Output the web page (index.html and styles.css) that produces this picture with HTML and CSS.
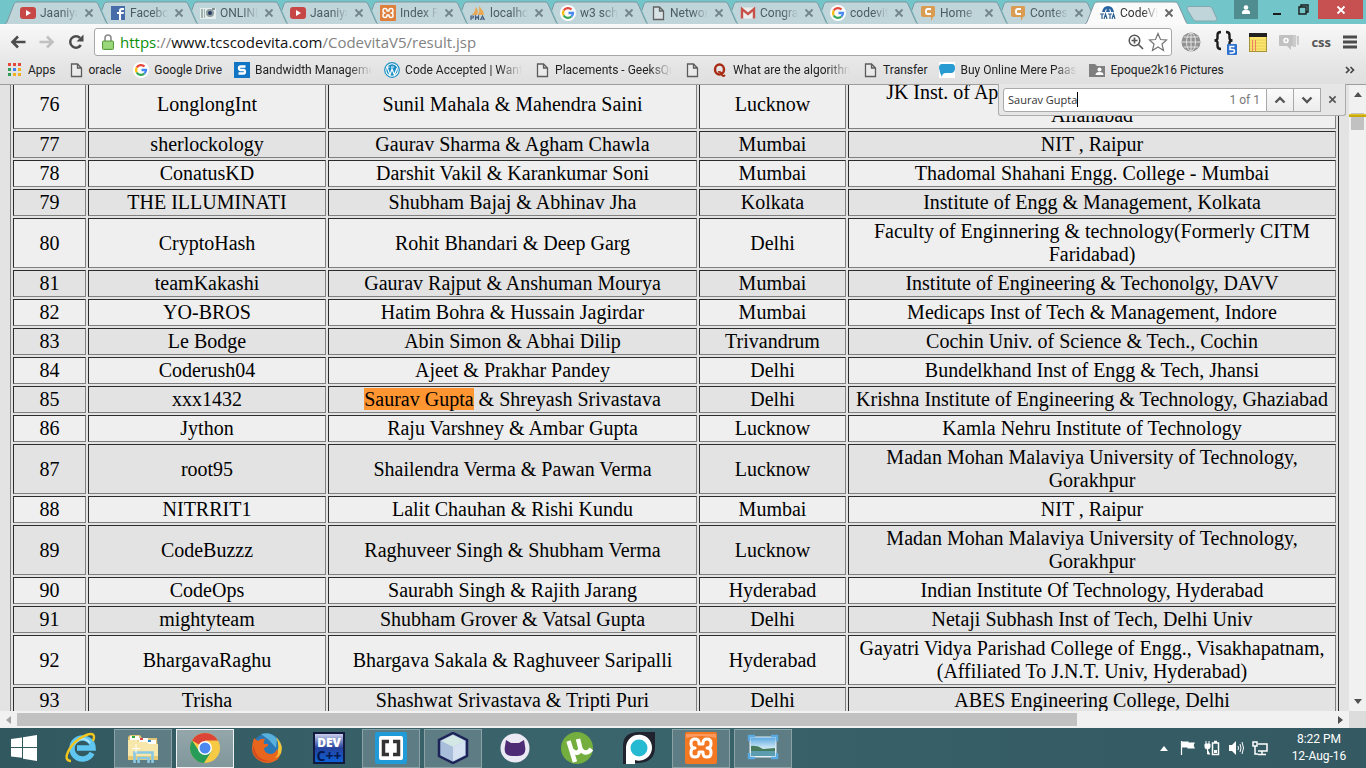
FILE: index.html
```html
<!DOCTYPE html>
<html lang="en">
<head>
<meta charset="utf-8">
<title>CodeVita</title>
<link rel="stylesheet" href="styles.css">
</head>
<body>
<svg class="defs" aria-hidden="true">
  <symbol id="tab" viewBox="0 0 106 24"><path d="M13 24 7 10 9 4Q10 2 12 2H90Q92 2 93 4L101 22Q102 24 104 24Z" fill="#bfd5da"/><path d="M7 10 9 4Q10 2 12 2H90Q92 2 93 4L101 22Q102 24 104 24" fill="none" stroke="#8097a0"/></symbol>
  <symbol id="tab-first" viewBox="0 0 106 24"><path d="M-1 24Q1 24 2 22L9 4Q10 2 12 2H90Q92 2 93 4L101 22Q102 24 104 24" fill="#bfd5da" stroke="#8097a0"/></symbol>
  <symbol id="tab-active" viewBox="0 0 106 24"><path d="M-1 25Q1 24 2 22L9 4Q10 2 12 2H90Q92 2 93 4L101 22Q102 24 104 25" fill="#fafafa" stroke="#8097a0"/></symbol>
  <symbol id="x" viewBox="0 0 10 10"><path d="M1.500 1.500 8.500 8.500M8.500 1.500 1.500 8.500" stroke="currentColor" stroke-width="1.800"/></symbol>
  <symbol id="youtube" viewBox="0 0 16 16"><rect y="2" width="16" height="12" rx="3" fill="#c8403f"/><path d="M6 5v6l5-3z" fill="#fff"/></symbol>
  <symbol id="facebook" viewBox="0 0 16 16"><rect x="1" y="1" width="14" height="14" fill="#4267a8"/><path d="M9 15V9H7V7h2V5.500Q9 3 11.500 3H14v2h-1.500Q11 5 11 6v1h3l-.5 2H11v6z" fill="#fff"/></symbol>
  <symbol id="camera" viewBox="0 0 16 16"><rect y="3" width="16" height="11" fill="#e9efef"/><path d="M1 4h2v9H1zM4 4h1v9H4z" fill="#9fb3ad"/><circle cx="10" cy="8" r="4" fill="#8a9a9c"/><circle cx="10" cy="8" r="2" fill="#23335c"/><path d="M12 3h3v2h-3z" fill="#7d8e90"/></symbol>
  <symbol id="xampp-mark" viewBox="0 0 32 32"><path d="M10 7Q6 7 6 11v1q0 4 4 4-4 0-4 4v1q0 4 4 4 4 0 4-4v-1h4v1q0 4 4 4t4-4v-1q0-4-4-4 4 0 4-4v-1q0-4-4-4t-4 4v1h-4v-1q0-4-4-4z" fill="none" stroke="#fff" stroke-width="3" stroke-linejoin="round"/></symbol>
  <symbol id="xampp" viewBox="0 0 16 16"><rect width="16" height="16" rx="1" fill="#e07c33"/><use href="#xampp-mark" width="16" height="16"/></symbol>
  <symbol id="pma" viewBox="0 0 16 16"><path d="M2 10Q5 7 6 2q3 4 1 8zM8 10q2-4 1-9 5 5 5 9z" fill="#eda64d"/><path d="M1 15v-4h2q1 1 0 2H1M5.500 15v-4l1.500 2 1.500-2v4M10.500 15l2-4 2 4m-3-1h2" fill="none" stroke="#435a7c" stroke-width="1.200"/></symbol>
  <symbol id="google" viewBox="0 0 16 16"><circle cx="8" cy="8" r="8" fill="#fff"/><g fill="none" stroke-width="2.300"><path d="M11.500 4.500A5 5 0 0 0 3.700 5.500" stroke="#ea4335"/><path d="M3.700 5.500a5 5 0 0 0 0 5" stroke="#fbbc05"/><path d="M3.700 10.500a5 5 0 0 0 7.800 1" stroke="#34a853"/><path d="M11.500 11.500A5 5 0 0 0 13 8H8.500" stroke="#4285f4"/></g></symbol>
  <symbol id="page" viewBox="0 0 16 16"><path d="M3.500 2h6l4 4v8.500h-10zM9.500 2v4h4" fill="#f1f1f1" fill-opacity=".5" stroke="#5c5c5c" stroke-width="1.300"/></symbol>
  <symbol id="gmail" viewBox="0 0 16 16"><rect x="1" y="2.500" width="14" height="11" fill="#eee"/><path d="M2 13.500V4l6 5 6-5v9.500" fill="none" stroke="#c84a40" stroke-width="2.400"/></symbol>
  <symbol id="chef" viewBox="0 0 16 16"><path d="M1 2q0-1 2-1h10q2 0 2 1v8q0 2-2 2l-2 4v-4H3q-2 0-2-2z" fill="#dc994b"/><path d="M11 4H7.500Q6 4 6 6.500T7.500 9H11" fill="none" stroke="#fff" stroke-width="2"/></symbol>
  <symbol id="tata" viewBox="0 0 16 16"><path d="M0 0h16v16H0z" fill="#fff"/><path d="M2 7Q3 1 8 1t6 6h-3q0-3.500-3-3.500T5 7zM7 3h2l1 4H6z" fill="#1f5c9c"/><path d="M0 9h4M2 9v5M4 14l1.500-5L7 14M8 9h4M10 9v5M12 14l1.500-5 1.500 5" fill="none" stroke="#24578f" stroke-width="1.200"/></symbol>
</svg>

<header class="browser">
  <div class="titlebar">
    <nav class="tabs" aria-label="Tabs">
      <div class="tab"><svg class="shape"><use href="#tab-first"/></svg><svg class="ico"><use href="#youtube"/></svg><a href="#">Jaaniya</a><button aria-label="Close tab"><svg><use href="#x"/></svg></button></div>
      <div class="tab"><svg class="shape"><use href="#tab"/></svg><svg class="ico"><use href="#facebook"/></svg><a href="#">Facebook</a><button aria-label="Close tab"><svg><use href="#x"/></svg></button></div>
      <div class="tab"><svg class="shape"><use href="#tab"/></svg><svg class="ico"><use href="#camera"/></svg><a href="#">ONLINE</a><button aria-label="Close tab"><svg><use href="#x"/></svg></button></div>
      <div class="tab"><svg class="shape"><use href="#tab"/></svg><svg class="ico"><use href="#youtube"/></svg><a href="#">Jaaniya</a><button aria-label="Close tab"><svg><use href="#x"/></svg></button></div>
      <div class="tab"><svg class="shape"><use href="#tab"/></svg><svg class="ico"><use href="#xampp"/></svg><a href="#">Index P</a><button aria-label="Close tab"><svg><use href="#x"/></svg></button></div>
      <div class="tab"><svg class="shape"><use href="#tab"/></svg><svg class="ico"><use href="#pma"/></svg><a href="#">localhost</a><button aria-label="Close tab"><svg><use href="#x"/></svg></button></div>
      <div class="tab"><svg class="shape"><use href="#tab"/></svg><svg class="ico"><use href="#google"/></svg><a href="#">w3 scho</a><button aria-label="Close tab"><svg><use href="#x"/></svg></button></div>
      <div class="tab"><svg class="shape"><use href="#tab"/></svg><svg class="ico"><use href="#page"/></svg><a href="#">Network</a><button aria-label="Close tab"><svg><use href="#x"/></svg></button></div>
      <div class="tab"><svg class="shape"><use href="#tab"/></svg><svg class="ico"><use href="#gmail"/></svg><a href="#">Congrat</a><button aria-label="Close tab"><svg><use href="#x"/></svg></button></div>
      <div class="tab"><svg class="shape"><use href="#tab"/></svg><svg class="ico"><use href="#google"/></svg><a href="#">codevita</a><button aria-label="Close tab"><svg><use href="#x"/></svg></button></div>
      <div class="tab"><svg class="shape"><use href="#tab"/></svg><svg class="ico"><use href="#chef"/></svg><a href="#">Home</a><button aria-label="Close tab"><svg><use href="#x"/></svg></button></div>
      <div class="tab"><svg class="shape"><use href="#tab"/></svg><svg class="ico"><use href="#chef"/></svg><a href="#">Contest</a><button aria-label="Close tab"><svg><use href="#x"/></svg></button></div>
      <div class="tab active"><svg class="shape"><use href="#tab-active"/></svg><svg class="ico"><use href="#tata"/></svg><a href="#">CodeVi</a><button aria-label="Close tab"><svg><use href="#x"/></svg></button></div>
    </nav>
    <button class="newtab" aria-label="New tab"><svg viewBox="0 0 32 16"><path d="M3 .5H23Q25 .5 26 2L31 13Q31 15 29 15H10Q8 15 7 13L1 3Q1 .5 3 .5Z" fill="#bfd5da" stroke="#86a6ae"/></svg></button>
    <div class="wincontrols">
      <button class="user" aria-label="Profile"><svg width="10" height="10" viewBox="0 0 10 10"><circle cx="5" cy="2.500" r="2.300" fill="#fff"/><path d="M1 9V7q0-1 2-2h4q2 1 2 2v2z" fill="#fff"/></svg></button>
      <button class="min" aria-label="Minimize"><svg width="10" height="12" viewBox="0 0 10 12"><path d="M1 10h8" stroke="#1c1c1c" stroke-width="2"/></svg></button>
      <button class="max" aria-label="Restore"><svg width="11" height="11" viewBox="0 0 11 11"><path d="M1 3h7v7H1zM3 3V1h7v7H8" fill="none" stroke="#1c1c1c" stroke-width="1.400"/></svg></button>
      <button class="close" aria-label="Close"><svg width="10" height="10"><use href="#x"/></svg></button>
    </div>
  </div>

  <div class="toolbar">
    <button class="nav" aria-label="Back"><svg viewBox="0 0 16 16"><path d="M15.500 8H2.500M8 2.500 2.500 8 8 13.500" fill="none" stroke="#4c4c4c" stroke-width="2.600"/></svg></button>
    <button class="nav" aria-label="Forward"><svg viewBox="0 0 16 16"><path d="M.5 8h13M8 2.500 13.500 8 8 13.500" fill="none" stroke="#c0c0c0" stroke-width="2.600"/></svg></button>
    <button class="nav" aria-label="Reload"><svg viewBox="0 0 16 16"><path d="M12.800 11A5.700 5.700 0 1 1 12 4" fill="none" stroke="#4c4c4c" stroke-width="2.500"/><path d="M15.500.5v7h-7z" fill="#4c4c4c"/></svg></button>
    <div class="omnibox">
      <svg class="lock" viewBox="0 0 12 16"><path d="M3 8V4q0-3 3-3t3 3v4" fill="none" stroke="#8b8b8b" stroke-width="1.600"/><rect x=".5" y="7" width="11" height="8.500" rx="1" fill="#8bd168" stroke="#5c9c45"/><path d="M1.500 9h9M1.500 11h9M1.500 13h9" stroke="#a9df8e"/></svg>
      <div class="url" role="textbox" aria-label="Address" contenteditable="true" spellcheck="false"><span class="secure">https</span>://<b>www.tcscodevita.com</b>/CodevitaV5/result.jsp</div>
      <button aria-label="Zoom"><svg width="16" height="16" viewBox="0 0 16 16"><circle cx="6.500" cy="6.500" r="5.300" fill="none" stroke="#585858" stroke-width="1.500"/><path d="M3.500 6.500h6M6.500 3.500v6M10.500 10.500l4.500 4.500" stroke="#585858" stroke-width="1.700"/></svg></button>
      <button aria-label="Bookmark"><svg width="20" height="20" viewBox="0 0 20 20"><path d="M10 1.500 12.500 7.500 18.500 8 14 12 15.500 18.500 10 15 4.500 18.500 6 12 1.500 8 7.500 7.500z" fill="#fff" stroke="#757575" stroke-width="1.200"/></svg></button>
    </div>
    <div class="extensions">
      <button aria-label="Globe"><svg width="20" height="20" viewBox="0 0 20 20"><circle cx="10" cy="10" r="9.500" fill="#929292"/><path d="M1 10h18M10 1v18M3 5h14M3 15h14" stroke="#e3e3e3"/><ellipse cx="10" cy="10" rx="4.500" ry="9" fill="none" stroke="#e3e3e3"/></svg></button>
      <button aria-label="Validator"><svg width="24" height="26" viewBox="0 0 24 26"><path d="M8 3Q4.500 3 4.500 6v3q0 2.500-3 2.500 3 0 3 2.500v3q0 3 3.500 3M13 3q3.500 0 3.500 3v3q0 2.500 3 2.500-3 0-3 2.500v3" fill="none" stroke="#1d1d1d" stroke-width="2.400"/><rect x="14" y="15" width="10" height="11" rx="1" fill="#2f72d0"/><path d="M21.500 17.500H17v3h2.500q2 0 2 1.700T19 24h-2.500" fill="none" stroke="#fff" stroke-width="1.500"/></svg></button>
      <button aria-label="Notes"><svg width="18" height="20" viewBox="0 0 18 20"><rect x=".5" y="1.500" width="17" height="18" fill="#fbe56c" stroke="#a69237"/><path d="M1 8h16M1 11h16M1 14h16M1 17h16" stroke="#e6d05c"/><path d="M3.500 8v11M6.500 8v11" stroke="#ed8067"/><path d="M0 1h18v4H0z" fill="#222"/></svg></button>
      <button aria-label="Chat"><svg width="20" height="18" viewBox="0 0 20 18"><path d="M7 2h10v12h-3M17.500 3H20v9h-2" fill="#ccc"/><path d="M1 2h12q1 0 1 1v9q0 1-1 1h-1v4l-4-4H1q-1 0-1-1V3q0-1 1-1z" fill="#c1c1c1"/><circle cx="7" cy="7.500" r="2" fill="none" stroke="#fff" stroke-width="1.500"/></svg></button>
      <button class="css">css</button>
      <button aria-label="Menu"><svg width="14" height="14" viewBox="0 0 14 14"><path d="M0 2h14M0 7h14M0 12h14" stroke="#4c4c4c" stroke-width="3"/></svg></button>
    </div>
  </div>

  <nav class="bookmarks" aria-label="Bookmarks">
    <a href="#"><svg viewBox="0 0 16 16"><path d="M1 1h3v3H1zM6 1h3v3H6zM11 1h3v3h-3z" fill="#e5463b"/><path d="M1 6h3v3H1zM1 11h3v3H1z" fill="#2f9e58"/><path d="M6 6h3v3H6z" fill="#3f80ee"/><path d="M11 6h3v3h-3zM6 11h3v3H6zM11 11h3v3h-3z" fill="#f2b01e"/></svg><span>Apps</span></a>
    <a href="#"><svg><use href="#page"/></svg><span>oracle</span></a>
    <a href="#"><svg><use href="#google"/></svg><span>Google Drive</span></a>
    <a href="#"><svg viewBox="0 0 16 16"><path d="M0 0h16v16H0z" fill="#0f75c4"/><path d="M11.500 4.500h-5q-1.500 0-1.500 1.700T6.500 8h3q1.500 0 1.500 1.800t-1.500 1.700h-5" fill="none" stroke="#fff" stroke-width="2.300"/></svg><span class="fade">Bandwidth Management</span></a>
    <a href="#"><svg viewBox="0 0 16 16"><circle cx="8" cy="8" r="7.300" fill="#fff" stroke="#1b8fc4" stroke-width="1.200"/><circle cx="8" cy="8" r="5.700" fill="#1b8fc4"/><path d="M3 5l3 8 2-6 2.500 6L13 6M2.500 5h3M7 5h3" fill="none" stroke="#fff" stroke-width="1.200"/></svg><span class="fade">Code Accepted | Wants to</span></a>
    <a href="#"><svg><use href="#page"/></svg><span class="fade">Placements - GeeksQuiz</span></a>
    <a href="#" aria-label="Bookmark"><svg><use href="#page"/></svg></a>
    <a href="#"><svg viewBox="0 0 16 16"><ellipse cx="7.500" cy="7.500" rx="4.500" ry="5" fill="none" stroke="#a82c13" stroke-width="2.500"/><path d="M6 10q3-1 4 3 1 2 3 0" fill="none" stroke="#a82c13" stroke-width="1.800"/></svg><span class="fade">What are the algorithms</span></a>
    <a href="#"><svg><use href="#page"/></svg><span>Transfer</span></a>
    <a href="#"><svg viewBox="0 0 16 16"><path d="M0 0h16v16H0z" fill="#fff"/><path d="M3 2h10q3 0 3 4t-3 5H7q-4 0-4 4-2-3-3-9 0-4 3-4z" fill="#289bd2"/></svg><span class="fade">Buy Online Mere Paas</span></a>
    <a href="#"><svg viewBox="0 0 16 16"><path d="M0 2h6l2 2h8v11H0z" fill="#7f7f7f"/><circle cx="10.500" cy="7.500" r="2" fill="#fff"/><path d="M6.500 13q0-3 4-3t4 3z" fill="#fff"/></svg><span>Epoque2k16 Pictures</span></a>
    <button class="more" aria-label="More bookmarks"><svg viewBox="0 0 10 8"><path d="M1 1l3 3-3 3M5.500 1l3 3-3 3" fill="none" stroke="#444" stroke-width="1.700"/></svg></button>
  </nav>
</header>

<main class="viewport">
  <form class="find">
    <label class="findbox"><input type="text" value="Saurav Gupta" aria-label="Find in page"><i class="caret"></i><span>1 of 1</span></label>
    <button type="button" aria-label="Previous"><svg viewBox="0 0 12 8"><path d="M1.500 6.500 6 2l4.500 4.500" fill="none" stroke="#555" stroke-width="2.400"/></svg></button>
    <button type="button" aria-label="Next"><svg viewBox="0 0 12 8"><path d="M1.500 1.500 6 6l4.500-4.500" fill="none" stroke="#555" stroke-width="2.400"/></svg></button>
    <button type="button" class="findclose" aria-label="Close find bar"><svg><use href="#x"/></svg></button>
  </form>
  <div class="content">
    <table class="results">
      <colgroup><col class="rank"><col class="team"><col class="members"><col class="city"><col></colgroup>
      <tbody>
      <tr><td>76</td><td>LonglongInt</td><td>Sunil Mahala &amp; Mahendra Saini</td><td>Lucknow</td><td>JK Inst. of Applied Physics &amp; Technology, Univ. of<br>Allahabad</td></tr>
      <tr><td>77</td><td>sherlockology</td><td>Gaurav Sharma &amp; Agham Chawla</td><td>Mumbai</td><td>NIT , Raipur</td></tr>
      <tr><td>78</td><td>ConatusKD</td><td>Darshit Vakil &amp; Karankumar Soni</td><td>Mumbai</td><td>Thadomal Shahani Engg. College - Mumbai</td></tr>
      <tr><td>79</td><td>THE ILLUMINATI</td><td>Shubham Bajaj &amp; Abhinav Jha</td><td>Kolkata</td><td>Institute of Engg &amp; Management, Kolkata</td></tr>
      <tr><td>80</td><td>CryptoHash</td><td>Rohit Bhandari &amp; Deep Garg</td><td>Delhi</td><td>Faculty of Enginnering &amp; technology(Formerly CITM Faridabad)</td></tr>
      <tr><td>81</td><td>teamKakashi</td><td>Gaurav Rajput &amp; Anshuman Mourya</td><td>Mumbai</td><td>Institute of Engineering &amp; Techonolgy, DAVV</td></tr>
      <tr><td>82</td><td>YO-BROS</td><td>Hatim Bohra &amp; Hussain Jagirdar</td><td>Mumbai</td><td>Medicaps Inst of Tech &amp; Management, Indore</td></tr>
      <tr><td>83</td><td>Le Bodge</td><td>Abin Simon &amp; Abhai Dilip</td><td>Trivandrum</td><td>Cochin Univ. of Science &amp; Tech., Cochin</td></tr>
      <tr><td>84</td><td>Coderush04</td><td>Ajeet &amp; Prakhar Pandey</td><td>Delhi</td><td>Bundelkhand Inst of Engg &amp; Tech, Jhansi</td></tr>
      <tr><td>85</td><td>xxx1432</td><td><mark>Saurav Gupta</mark> &amp; Shreyash Srivastava</td><td>Delhi</td><td>Krishna Institute of Engineering &amp; Technology, Ghaziabad</td></tr>
      <tr><td>86</td><td>Jython</td><td>Raju Varshney &amp; Ambar Gupta</td><td>Lucknow</td><td>Kamla Nehru Institute of Technology</td></tr>
      <tr><td>87</td><td>root95</td><td>Shailendra Verma &amp; Pawan Verma</td><td>Lucknow</td><td>Madan Mohan Malaviya University of Technology, Gorakhpur</td></tr>
      <tr><td>88</td><td>NITRRIT1</td><td>Lalit Chauhan &amp; Rishi Kundu</td><td>Mumbai</td><td>NIT , Raipur</td></tr>
      <tr><td>89</td><td>CodeBuzzz</td><td>Raghuveer Singh &amp; Shubham Verma</td><td>Lucknow</td><td>Madan Mohan Malaviya University of Technology, Gorakhpur</td></tr>
      <tr><td>90</td><td>CodeOps</td><td>Saurabh Singh &amp; Rajith Jarang</td><td>Hyderabad</td><td>Indian Institute Of Technology, Hyderabad</td></tr>
      <tr><td>91</td><td>mightyteam</td><td>Shubham Grover &amp; Vatsal Gupta</td><td>Delhi</td><td>Netaji Subhash Inst of Tech, Delhi Univ</td></tr>
      <tr><td>92</td><td>BhargavaRaghu</td><td>Bhargava Sakala &amp; Raghuveer Saripalli</td><td>Hyderabad</td><td>Gayatri Vidya Parishad College of Engg., Visakhapatnam,(Affiliated To J.N.T. Univ, Hyderabad)</td></tr>
      <tr><td>93</td><td>Trisha</td><td>Shashwat Srivastava &amp; Tripti Puri</td><td>Delhi</td><td>ABES Engineering College, Delhi</td></tr>
      </tbody>
    </table>
  </div>
  <div class="vscroll" aria-hidden="true">
    <svg viewBox="0 0 8 5"><path d="M0 5 4 0l4 5z" fill="#505050"/></svg>
    <div class="vthumb"><div class="hit"></div></div>
    <svg viewBox="0 0 8 5"><path d="M0 0h8L4 5z" fill="#505050"/></svg>
  </div>
  <div class="hscroll" aria-hidden="true">
    <svg viewBox="0 0 5 8"><path d="M5 0v8L0 4z" fill="#a3a3a3"/></svg>
    <div class="htrack"><div class="hthumb"></div></div>
    <svg viewBox="0 0 5 8"><path d="M0 0v8l5-4z" fill="#505050"/></svg>
  </div>
  <div class="corner"></div>
</main>

<footer class="taskbar">
  <button class="start" aria-label="Start"><svg width="28" height="26" viewBox="0 0 28 26"><path d="M1 4 12 2.500V12H1zM13 2.300 27 0v12H13zM1 13h11v9.800L1 21.500zM13 13h14v13l-14-2.300z" fill="#fff"/></svg></button>
  <button aria-label="Internet Explorer"><svg viewBox="0 0 32 32"><path d="M27 21A10.500 10.500 0 1 1 28 16H12" fill="none" stroke="#5fc6f2" stroke-width="5.500"/><path d="M10 11A9 9 0 0 1 25 11" fill="none" stroke="#a9e4fb" stroke-width="2"/><path d="M6 29C-4 29 5 13 14 7s18-8 14 2" fill="none" stroke="#f2c61f" stroke-width="2.400"/></svg></button>
  <button class="open" aria-label="File Explorer"><svg viewBox="0 0 32 32"><path d="M1 5 3 3h10l2 3h15l1 20H1z" fill="#e0c478"/><path d="M3 4h9v4H3zM12 6h9v4h-9zM20 8h9v4h-9z" fill="#fff"/><path d="M5 4h3v2H5z" fill="#3a3"/><path d="M13 6h3v2h-3z" fill="#d44"/><path d="M21 8h3v2h-3z" fill="#38c"/><path d="M1 8h9l2 2h8l2 2h9v16H1z" fill="#f8e7aa"/><path d="M1 24h30v4H1z" fill="#eacb72"/><path d="M7.500 31V20.500h18V31M11.500 31v-5h10v5" fill="none" stroke="#8ac9e4" stroke-width="2.600"/><path d="M9 12v9M5 16.500h8" stroke="#fff"/></svg></button>
  <button class="open current" aria-label="Google Chrome"><svg viewBox="0 0 32 32"><circle cx="16" cy="16" r="15" fill="#f7ca45"/><path d="M16 16 3 8.500A15 15 0 0 1 29 8.500H16z" fill="#db4437"/><path d="M3 8.500A15 15 0 0 0 15 31l7.500-12L16 16l-6 3z" fill="#279c58"/><circle cx="16" cy="16" r="7" fill="#fff"/><circle cx="16" cy="16" r="5.500" fill="#4a87ee"/></svg></button>
  <button aria-label="Firefox"><svg viewBox="0 0 32 32"><circle cx="16" cy="16" r="14.500" fill="#2a78b5"/><path d="M10 2q10-3 16 5l-1 9-7-8z" fill="#58b0dc"/><path d="M25 5q10 10 3 20-7 7-14 5 9-2 12-9 3-8-1-16z" fill="#f6c634"/><path d="M3 6l4 3q3-3 7-2-2 3-1 5h4q1 2-4 4 0 5 6 6 5 0 7-5 3 5-2 9 4-1 5-5 0 6-5 8-8 4-15 0Q-3 23 3 6z" fill="#e8651d"/><path d="M2 14q-1 12 10 15 5 1 8 0-11 0-15-8z" fill="#d44a20"/></svg></button>
  <button aria-label="Dev-C++"><svg viewBox="0 0 32 32"><defs><linearGradient id="dev" x2="0" y2="1"><stop stop-color="#d5d8f2"/><stop offset=".5" stop-color="#26429c"/><stop offset="1" stop-color="#0b63dc"/></linearGradient></defs><rect x="1" y="1" width="30" height="30" fill="url(#dev)" stroke="#121a3e" stroke-width="2"/><text x="16" y="15" text-anchor="middle" class="dev">DEV</text><text x="16" y="29" text-anchor="middle" class="cpp">C++</text></svg></button>
  <button class="open" aria-label="Brackets"><svg viewBox="0 0 32 32"><rect width="32" height="32" rx="2" fill="#209bd8"/><rect x="4" y="4" width="24" height="24" rx="2" fill="#fff"/><path d="M14 9.500H8.500v13H14M18 9.500h5.500v13H18" fill="none" stroke="#333" stroke-width="3.500"/></svg></button>
  <button class="open" aria-label="NetBeans"><svg viewBox="0 0 32 32"><path d="M16 1 30 8v16l-14 7L2 24V8z" fill="#a3bddb" stroke="#1d2357" stroke-width="2.500"/><path d="M16 3 28 9 16 15 4 9z" fill="#d3e7e4"/><path d="M4 9l12 6v14L4 23z" fill="#a9bedb"/><path d="M28 9l-12 6v14l12-6z" fill="#d5e1f1"/></svg></button>
  <button aria-label="GitHub"><svg viewBox="0 0 32 32"><circle cx="16" cy="16" r="14.500" fill="#ebe9f4"/><path d="M7 8l5 3h8l5-3 1 6q2 10-7 10h-6Q4 24 6 14z" fill="#4e2c75"/></svg></button>
  <button aria-label="uTorrent"><svg viewBox="0 0 32 32"><circle cx="16" cy="16" r="16" fill="#73ae3e"/><path d="M7.500 9 14 30M10.500 18q6 6 9-1L17 7M19.500 17q5 7 11 0" fill="none" stroke="#fff" stroke-width="4.500"/></svg></button>
  <button aria-label="Pushbullet"><svg viewBox="0 0 32 32"><path d="M0 32V14Q0 0 16 0h16v15q0 17-20 16v1z" fill="#20232d"/><path d="M3 32V16A13 13 0 1 1 12 28v4z" fill="#fff"/><circle cx="16" cy="16" r="8.500" fill="#25b9d2"/></svg></button>
  <button class="open" aria-label="XAMPP"><svg viewBox="0 0 32 32"><rect width="32" height="32" rx="2" fill="#f47721"/><path d="M1 2h30v4q-15-4-30 0z" fill="#fa9a60"/><use href="#xampp-mark" width="32" height="32"/></svg></button>
  <button class="open" aria-label="Photo viewer"><svg viewBox="0 0 32 32"><defs><linearGradient id="sky" x2="0" y2="1"><stop stop-color="#54a5e1"/><stop offset=".6" stop-color="#d9eef6"/></linearGradient></defs><path d="M3 5h26v20H3z" fill="url(#sky)" stroke="#e5f0f5"/><path d="M4 14q6-1 12 3l12-1v4H4z" fill="#457b5c"/><path d="M4 19h24v5H4z" fill="#5b9cae"/><path d="M2 9V4h6M24 4h6v5M2 21v5h6M24 26h6v-5" fill="none" stroke="#5ba9e1" stroke-width="2.500"/></svg></button>
  <div class="tray">
    <button aria-label="Show hidden icons"><svg width="8" height="5" viewBox="0 0 8 5"><path d="M0 5 4 0l4 5z" fill="#fff"/></svg></button>
    <button aria-label="Action Center"><svg width="16" height="16" viewBox="0 0 16 16"><path d="M1.500 1v14M2 2h6v1h6l-1 2 1 3H8V7H2z" fill="#fff" stroke="#fff" stroke-width="1.200"/></svg></button>
    <button aria-label="Power"><svg width="16" height="16" viewBox="0 0 16 16"><path d="M1 4h5v3q0 2-2.500 2T1 7zM2 1v3M5 1v3M3.500 9v5H6" fill="#fff" stroke="#fff"/><path d="M8.500 3h6v11.500h-6zM10 1.500h3" fill="none" stroke="#fff" stroke-width="1.500"/><path d="M10 10h3v3h-3z" fill="#fff"/></svg></button>
    <button aria-label="Volume"><svg width="16" height="16" viewBox="0 0 16 16"><path d="M1 5h3l4-4v14l-4-4H1z" fill="#fff"/><path d="M10 6q1 2 0 4M12 4q2 4 0 8M14 2q3 6 0 12" fill="none" stroke="#fff"/></svg></button>
    <button aria-label="Network"><svg width="16" height="16" viewBox="0 0 16 16"><path d="M6 4h9v7H6M10 11v3M6 14.500h8M1 2h4v4H1zM3 6v8h3" fill="none" stroke="#fff" stroke-width="1.500"/></svg></button>
  </div>
  <div class="clock"><span>8:22 PM</span><span>12-Aug-16</span></div>
</footer>
</body>
</html>
```

FILE: styles.css
```css
* { box-sizing: border-box; }
body {
  margin: 0;
  height: 100vh;
  display: flex;
  flex-direction: column;
  overflow: hidden;
  font-family: Roboto, "Open Sans", sans-serif;
  font-size: 12px;
  color: #222;
}
.defs { position: absolute; width: 0; height: 0; }
button {
  display: flex;
  align-items: center;
  justify-content: center;
  margin: 0;
  padding: 0;
  border: 0;
  background: none;
  color: inherit;
  font: inherit;
}
a { color: inherit; text-decoration: none; }
svg { display: block; flex: none; }

/* Tab strip */
.titlebar {
  display: flex;
  height: 24px;
  padding-left: 10px;
  background: #72c6ca;
}
.tabs { display: flex; }
.tab {
  position: relative;
  display: flex;
  align-items: center;
  width: 90px;
  height: 24px;
  padding: 2px 0 0 10px;
  color: #4c5c61;
}
.tab .shape { position: absolute; left: -5px; top: 0; width: 106px; height: 24px; }
.tab .ico { position: relative; width: 16px; height: 16px; opacity: .95; }
.tab a {
  position: relative;
  width: 38px;
  margin: 0 6px 0 4px;
  overflow: hidden;
  white-space: nowrap;
  mask-image: linear-gradient(90deg, #000 60%, transparent);
}
.tab button { position: relative; color: #71858a; }
.tab button svg { width: 10px; height: 10px; }
.tab.active { z-index: 1; color: #333; }
.tab.active button { color: #666; }
.newtab { align-self: flex-start; margin: 6px 0 0 6px; }
.newtab svg { width: 32px; height: 16px; }
.wincontrols { display: flex; align-items: flex-start; margin-left: auto; margin-right: 3px; }
.wincontrols button { height: 19px; }
.user { width: 24px; background: #4f8d90; }
.min { width: 38px; }
.max { width: 22px; padding-right: 8px; }
.close { width: 45px; background: #c75050; color: #fff; }

/* Toolbar */
.toolbar {
  display: flex;
  align-items: center;
  height: 34px;
  padding: 3px 9px 3px 3px;
  border-top: 1px solid #fafafa;
  background: linear-gradient(#f8f8f8, #e9e9e9);
}
.nav { width: 29px; }
.nav svg { width: 16px; height: 16px; }
.omnibox {
  flex: 1;
  display: flex;
  align-items: center;
  gap: 4px;
  height: 28px;
  margin: 0 9px 0 4px;
  padding: 0 3px 0 7px;
  border: 1px solid #a8a8a8;
  border-radius: 3px;
  background: #fff;
}
.lock { width: 12px; height: 16px; }
.url {
  flex: 1;
  padding-left: 2px;
  font-family: "Open Sans", "Noto Sans", sans-serif;
  font-size: 15px;
  line-height: 22px;
  color: #828282;
}
.url b { font-weight: 400; color: #111; }
.secure { color: #0b8f0b; }
.extensions { display: flex; align-items: center; gap: 12px; }
.css { font: 700 13px "Open Sans", sans-serif; color: #555; }

.bookmarks {
  display: flex;
  align-items: center;
  gap: 12px;
  height: 27px;
  padding: 0 11px 2px 7px;
  border-bottom: 1px solid #9d9d9d;
  background: linear-gradient(#e8e8e8, #dfdfdf);
}
.bookmarks a { display: flex; align-items: center; gap: 5px; white-space: nowrap; }
.bookmarks a svg { width: 16px; height: 16px; }
.fade {
  width: 117px;
  overflow: hidden;
  mask-image: linear-gradient(90deg, #000 80%, transparent);
}
.more { margin-left: auto; }
.more svg { width: 10px; height: 8px; }

/* Page area */
.viewport {
  position: relative;
  flex: 1;
  min-height: 0;
  display: grid;
  grid-template: minmax(0, 1fr) 17px / minmax(0, 1fr) 17px;
}
.content { overflow: hidden; padding: 0 10px; background: #e3e3e3; }
.results {
  width: 100%;
  margin-top: -8px;
  table-layout: fixed;
  border: solid #808080;
  border-width: 0 1px;
  border-right-color: #2c2c2c;
  border-spacing: 2px;
  color: #000;
  font: 20px/23px "Liberation Serif", "Times New Roman", serif;
  text-align: center;
}
.rank { width: 73px; }
.team { width: 238px; }
.members { width: 369px; }
.city { width: 147px; }
.results td {
  padding: 1px;
  border: 1px solid #808080;
  border-top-color: #2c2c2c;
  border-left-color: #2c2c2c;
  background: #e3e3e3;
}
.results tr:nth-child(odd) td { background: #efefef; }
mark { background: #ff9632; color: #000; }

.find {
  position: absolute;
  z-index: 2;
  top: -1px;
  right: 20px;
  display: flex;
  align-items: center;
  width: 348px;
  height: 32px;
  padding: 4px 2px 4px 4px;
  border: 1px solid #acacac;
  border-top: 0;
  border-radius: 0 0 3px 3px;
  background: #e6e6e6;
}
.findbox {
  flex: 1;
  display: flex;
  align-items: center;
  height: 24px;
  padding: 0 6px 0 4px;
  border: 1px solid #a9a9a9;
  border-radius: 3px 0 0 3px;
  background: #fff;
}
.findbox input {
  field-sizing: content;
  padding: 0;
  border: 0;
  outline: 0;
  background: none;
  font-family: "Open Sans", "Noto Sans", sans-serif;
  font-size: 11px;
  color: #333;
}
.caret { width: 1px; height: 15px; background: #000; }
.findbox span { margin-left: auto; color: #777; }
.find button {
  width: 27px;
  height: 24px;
  border: 1px solid #a9a9a9;
  border-left: 0;
  background: linear-gradient(#fbfbfb, #ececec);
}
.find button svg { width: 12px; height: 8px; }
.find .findclose { width: 22px; border: 0; background: none; color: #555; }
.find .findclose svg { width: 9px; height: 9px; }

.vscroll {
  display: flex;
  flex-direction: column;
  align-items: center;
  justify-content: space-between;
  padding: 7px 0;
  background: #f1f1f1;
}
.vscroll svg { width: 8px; height: 5px; }
.vthumb { width: 100%; height: 17px; margin: 16px 0 auto; border: solid #f1f1f1; border-width: 0 2px; background: #c1c1c1; }
.hit { height: 3px; margin: 1px -2px 0; border-top: 1px solid #e2c42c; background: #c9a90c; }
.hscroll { display: flex; align-items: center; gap: 6px; padding: 0 6px; background: #f1f1f1; }
.hscroll svg { width: 5px; height: 8px; }
.htrack { flex: 1; }
.hthumb { width: 80.6%; height: 13px; background: #c1c1c1; }
.corner { background: #dcdcdc; }

/* Taskbar */
.taskbar {
  display: flex;
  align-items: center;
  gap: 4px;
  height: 40px;
  background: linear-gradient(90deg, #32585f, #3b656d 45%, #376068 60%, #345962);
}
.taskbar > button { width: 58px; height: 39px; border: 1px solid transparent; }
.taskbar > button.start { width: 48px; }
.taskbar > button > svg { width: 32px; height: 32px; }
.taskbar > button.start > svg { width: 28px; height: 26px; }
.taskbar > button.open { border-color: #8ba2a7; background: #5d7c83; }
.taskbar > button.current { border-color: #eef2f3; background: linear-gradient(#94a6aa, #80979c); }
.dev { font: 900 12px "Open Sans", sans-serif; fill: #fff; }
.cpp { font: 700 14px "Open Sans", sans-serif; fill: #06184c; }
.tray { display: flex; align-items: center; gap: 8px; margin-left: auto; }
.tray button:first-child { margin-right: 4px; }
.clock {
  display: flex;
  flex-direction: column;
  width: 94px;
  text-align: center;
  line-height: 17px;
  color: #fff;
}
```
